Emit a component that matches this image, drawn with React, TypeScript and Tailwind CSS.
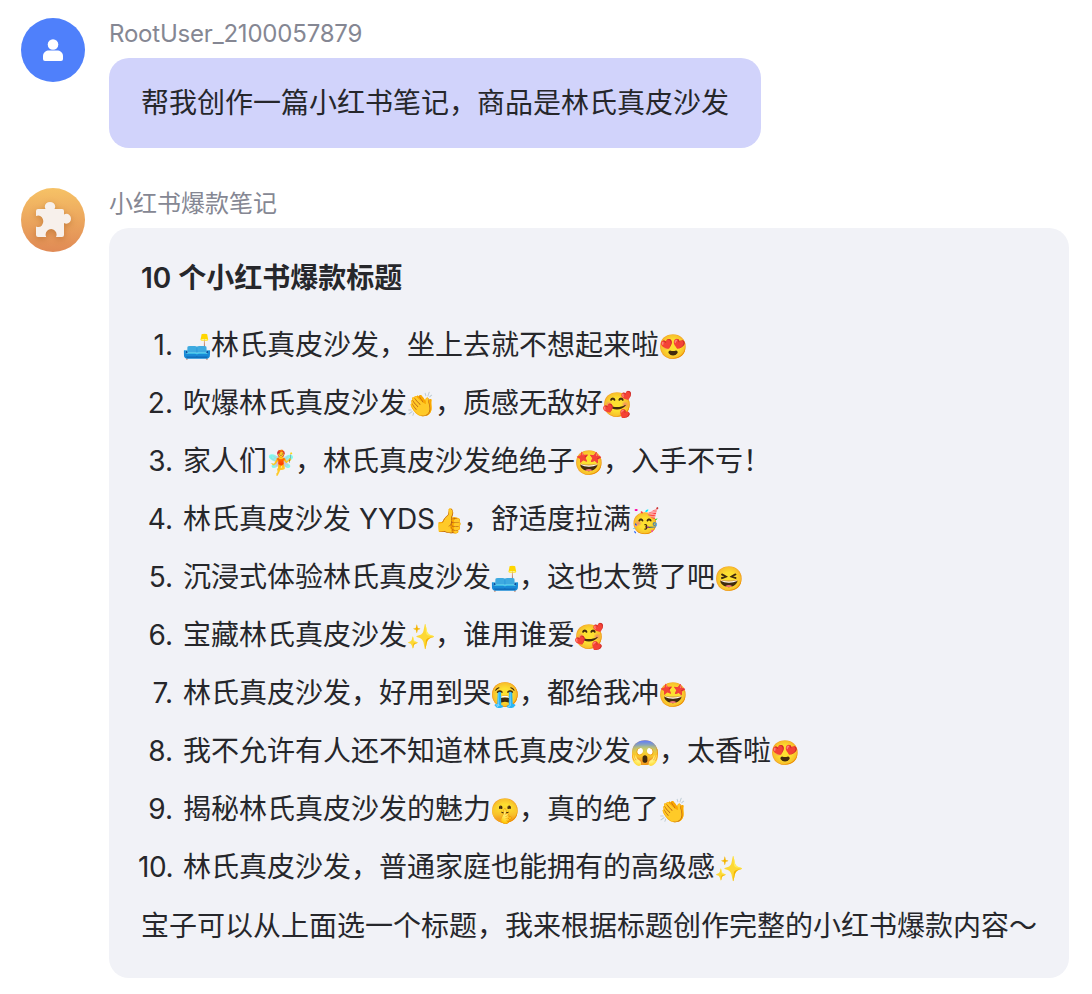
const FONT = "font-['Inter','Noto_Sans_CJK_SC',sans-serif]";

function E({ c }: { c: string }) {
  return <span className="inline-flex w-7 justify-center text-[24px]">{c}</span>;
}

const items: (string | [string])[][] = [
  [["🛋️"], "林氏真皮沙发，坐上去就不想起来啦", ["😍"]],
  ["吹爆林氏真皮沙发", ["👏"], "，质感无敌好", ["🥰"]],
  ["家人们", ["🧚"], "，林氏真皮沙发绝绝子", ["🤩"], "，入手不亏！"],
  ["林氏真皮沙发 YYDS", ["👍"], "，舒适度拉满", ["🥳"]],
  ["沉浸式体验林氏真皮沙发", ["🛋️"], "，这也太赞了吧", ["😆"]],
  ["宝藏林氏真皮沙发", ["✨"], "，谁用谁爱", ["🥰"]],
  ["林氏真皮沙发，好用到哭", ["😭"], "，都给我冲", ["🤩"]],
  ["我不允许有人还不知道林氏真皮沙发", ["😱"], "，太香啦", ["😍"]],
  ["揭秘林氏真皮沙发的魅力", ["🤫"], "，真的绝了", ["👏"]],
  ["林氏真皮沙发，普通家庭也能拥有的高级感", ["✨"]],
];

export default function App() {
  return (
    <div className={`${FONT} w-[1092px] h-[994px] bg-white text-[#26272b] text-[28px] overflow-hidden`}>
      <div className="flex gap-6 pl-[21px] pt-[18px]">
        <div className="w-16 h-16 rounded-full bg-[#4f80fb] flex items-center justify-center shrink-0">
          <svg width="20" height="22" viewBox="0 0 20 22" fill="white">
            <circle cx="10" cy="5.500" r="5.300" />
            <path d="M0 17c0-3.500 3-5.500 6-5.500h8c3 0 6 2 6 5.500v3a2 2 0 0 1-2 2H2a2 2 0 0 1-2-2z" />
          </svg>
        </div>
        <div className="flex flex-col">
          <div className="text-2xl leading-8 text-[#858793] h-[40px] tracking-[-0.2px]">RootUser_2100057879</div>
          <div className="bg-[#d1d3fb] rounded-[20px] h-[90px] px-8 flex items-center w-fit">帮我创作一篇小红书笔记，商品是林氏真皮沙发</div>
        </div>
      </div>
      <div className="flex gap-6 pl-[21px] pt-10">
        <div className="w-16 h-16 rounded-full bg-linear-to-b from-[#f6c266] to-[#e08a55] flex items-center justify-center shrink-0">
          <svg width="36" height="36" viewBox="0 0 36 36" fill="#f7f0eb" className="drop-shadow-[0_2px_3px_rgba(150,80,20,0.4)]">
            <path d="M3 7h7.500c-.5-1-.7-2-.7-2.600a5.200 4.400 0 0 1 10.400 0c0 .6-.2 1.600-.7 2.600H27a2 2 0 0 1 2 2v3.500c.8-.5 1.600-.7 2.300-.7a4.700 5 0 0 1 0 10c-.7 0-1.500-.2-2.300-.7V33a2 2 0 0 1-2 2h-6c.4-.8.6-1.600.6-2.300a5.500 5.700 0 0 0-11 0c0 .7.2 1.500.6 2.300H3a2 2 0 0 1-2-2v-8.500c.8.4 1.600.6 2.300.6a5 5.800 0 0 0 0-11.600c-.7 0-1.500.2-2.300.6V9a2 2 0 0 1 2-2z" />
          </svg>
        </div>
        <div className="flex flex-col">
          <div className="text-2xl leading-8 text-[#858793] h-[40px]">小红书爆款笔记</div>
          <div className="bg-[#f1f2f7] rounded-[20px] w-[960px] h-[750px] px-8 pt-[30px]">
            <div className="font-semibold leading-10">10 个小红书爆款标题</div>
            <ol className="list-none mt-[18px]">
              {items.map((row, i) => (
                <li key={i} className="flex gap-[10px] h-[58px] leading-[58px]">
                  <span className={`w-8 shrink-0 flex justify-end ${i === 9 ? "tracking-[-0.5px]" : ""}`}>{i + 1}.</span>
                  <span>
                    {row.map((p, j) => (typeof p === "string" ? <span key={j}>{p}</span> : <E key={j} c={p[0]} />))}
                  </span>
                </li>
              ))}
            </ol>
            <div className="mt-[10px] leading-10">宝子可以从上面选一个标题，我来根据标题创作完整的小红书爆款内容～</div>
          </div>
        </div>
      </div>
    </div>
  );
}
